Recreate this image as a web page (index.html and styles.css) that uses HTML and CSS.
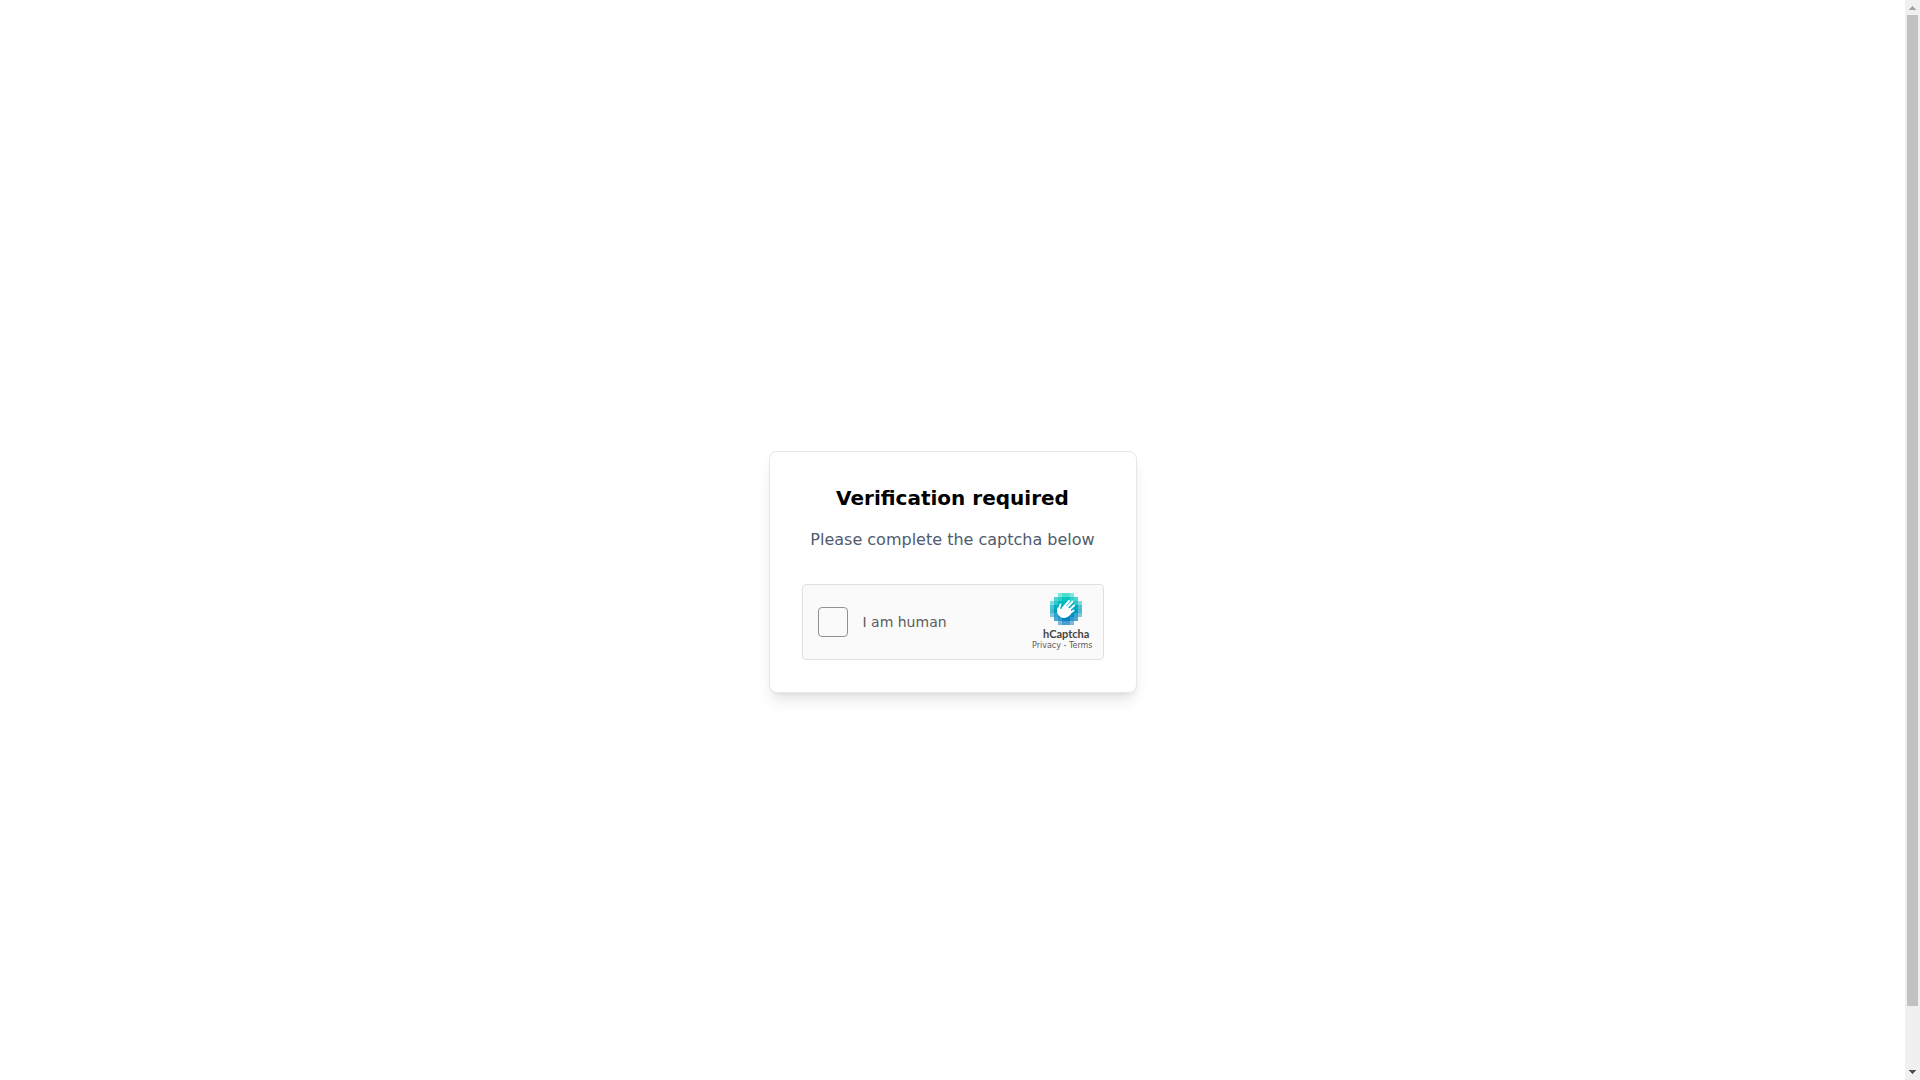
FILE: index.html
```html
<!DOCTYPE html>
<html lang="en">
<head>
    <meta charset="UTF-8">
    <meta name="viewport" content="width=device-width, initial-scale=1.0">
    <title>Verification required</title>
    <link rel="stylesheet" href="styles.css">
</head>
<body>
    <div class="viewport">
        <main class="page">
            <form class="card">
                <h1 class="title">Verification required</h1>
                <p class="subtitle">Please complete the captcha below</p>
                <div class="captcha">
                    <input type="checkbox" class="captcha-check" id="human">
                    <label class="captcha-label" for="human">I am human</label>
                    <div class="brand">
                        <div class="brand-mark">
                            <svg class="brand-logo" viewBox="0 0 32 32" shape-rendering="crispEdges" aria-hidden="true">
                                <g fill="#00d4bf"><path opacity=".5" d="M8 0h4v4H8zM20 0h4v4h-4z"/><path opacity=".7" d="M12 0h8v4h-8z"/></g>
                                <g fill="#00c6bf"><path opacity=".7" d="M4 4h4v4H4zM24 4h4v4h-4z"/><path opacity=".8" d="M8 4h4v4H8zM20 4h4v4h-4z"/><path d="M12 4h8v4h-8z"/></g>
                                <g fill="#00b9bf"><path opacity=".5" d="M0 8h4v4H0zM28 8h4v4h-4z"/><path opacity=".8" d="M4 8h4v4H4zM24 8h4v4h-4z"/><path d="M8 8h16v4H8z"/></g>
                                <g fill="#00abbf"><path opacity=".7" d="M0 12h4v4H0zM28 12h4v4h-4z"/><path d="M4 12h24v4H4z"/></g>
                                <g fill="#009dbf"><path opacity=".7" d="M0 16h4v4H0zM28 16h4v4h-4z"/><path d="M4 16h24v4H4z"/></g>
                                <g fill="#008fbf"><path opacity=".5" d="M0 20h4v4H0zM28 20h4v4h-4z"/><path opacity=".8" d="M4 20h4v4H4zM24 20h4v4h-4z"/><path d="M8 20h16v4H8z"/></g>
                                <g fill="#0082bf"><path opacity=".7" d="M4 24h4v4H4zM24 24h4v4h-4z"/><path opacity=".8" d="M8 24h4v4H8zM20 24h4v4h-4z"/><path d="M12 24h8v4h-8z"/></g>
                                <g fill="#0074bf"><path opacity=".5" d="M8 28h4v4H8zM20 28h4v4h-4z"/><path opacity=".7" d="M12 28h8v4h-8z"/></g>
                                <g shape-rendering="geometricPrecision" stroke="#fff" stroke-linecap="round" fill="none">
                                    <path fill="#fff" stroke="none" d="M7.500 14.500L11 16L15 12L21 17L21 21C18.500 24 15.500 25.500 13 25C9 24 6.500 20.500 7 16.500Z"/>
                                    <path stroke-width="2" d="M10.500 11.500L8.500 17M13 15L19 8M15.500 16L22.500 8.500M18 18L24 12.500M19.500 20.500L23.500 17.500"/>
                                </g>
                            </svg>
                            <span class="brand-name">hCaptcha</span>
                        </div>
                        <span class="brand-links"><a href="#privacy">Privacy</a> - <a href="#terms">Terms</a></span>
                    </div>
                </div>
            </form>
        </main>
    </div>
    <div class="scrollbar" aria-hidden="true">
        <svg class="scroll-arrow arrow-up" viewBox="0 0 15 15" shape-rendering="crispEdges"><path d="M7 6h1v1h1v1h1v1h1v1H4V9h1V8h1V7h1z"/></svg>
        <div class="scroll-track">
            <div class="scroll-thumb"></div>
        </div>
        <svg class="scroll-arrow arrow-down" viewBox="0 0 15 15" shape-rendering="crispEdges"><path d="M4 5h7v1h-1v1H9v1H8v1H7V8H6V7H5V6H4z"/></svg>
    </div>
</body>
</html>
```
FILE: styles.css
```css
* {
    margin: 0;
    padding: 0;
    box-sizing: border-box;
}

body {
    height: 100vh;
    display: flex;
    font-family: "DejaVu Sans", sans-serif;
    background-color: white;
}

.viewport {
    flex: 1;
    overflow-y: auto;
    scrollbar-width: none;
}

.page {
    min-height: calc(100vh + 64px);
    padding: 32px;
    display: flex;
    align-items: center;
    justify-content: center;
}

.card {
    padding: 32px;
    border: 1px solid #e5e7eb;
    border-radius: 8px;
    background-color: white;
    box-shadow: 0 10px 15px -3px rgba(0, 0, 0, 0.1), 0 4px 6px -4px rgba(0, 0, 0, 0.1);
    text-align: center;
}

.title {
    margin-bottom: 16px;
    font-size: 20px;
    line-height: 28px;
    font-weight: bold;
    color: black;
}

.subtitle {
    margin-bottom: 32px;
    font-size: 16px;
    line-height: 24px;
    color: #4f5b6e;
}

.captcha {
    width: 302px;
    height: 76px;
    padding: 0 10px 0 15px;
    display: flex;
    align-items: center;
    gap: 15px;
    border: 1px solid #e0e0e0;
    border-radius: 4px;
    background-color: #fafafa;
}

.captcha-check {
    appearance: none;
    width: 30px;
    height: 30px;
    border: 1px solid #919191;
    border-radius: 4px;
    background-color: #fafafa;
    cursor: pointer;
}

.captcha-label {
    flex: 1;
    font-size: 14px;
    line-height: 20px;
    text-align: left;
    color: #5c5c5c;
}

.brand {
    display: flex;
    flex-direction: column;
    color: #5c5c5c;
}

.brand-mark {
    padding-left: 8px;
    display: flex;
    flex-direction: column;
    align-items: center;
    gap: 2px;
}

.brand-logo {
    width: 32px;
    height: 32px;
}

.brand-name {
    font-family: Lato, sans-serif;
    font-size: 11px;
    line-height: 14px;
    font-weight: bold;
    color: #444;
}

.brand-links {
    font-size: 8px;
    line-height: 10px;
}

.brand-links a {
    color: inherit;
    text-decoration: none;
}

.scrollbar {
    width: 15px;
    display: flex;
    flex-direction: column;
    background-color: #f0f0f0;
}

.scroll-arrow {
    width: 15px;
    height: 15px;
}

.arrow-up {
    fill: #a3a3a3;
}

.arrow-down {
    fill: #505050;
}

.scroll-track {
    flex: 1;
    padding: 0 2px;
}

.scroll-thumb {
    height: 94.4%;
    background-color: #c1c1c1;
}
```
